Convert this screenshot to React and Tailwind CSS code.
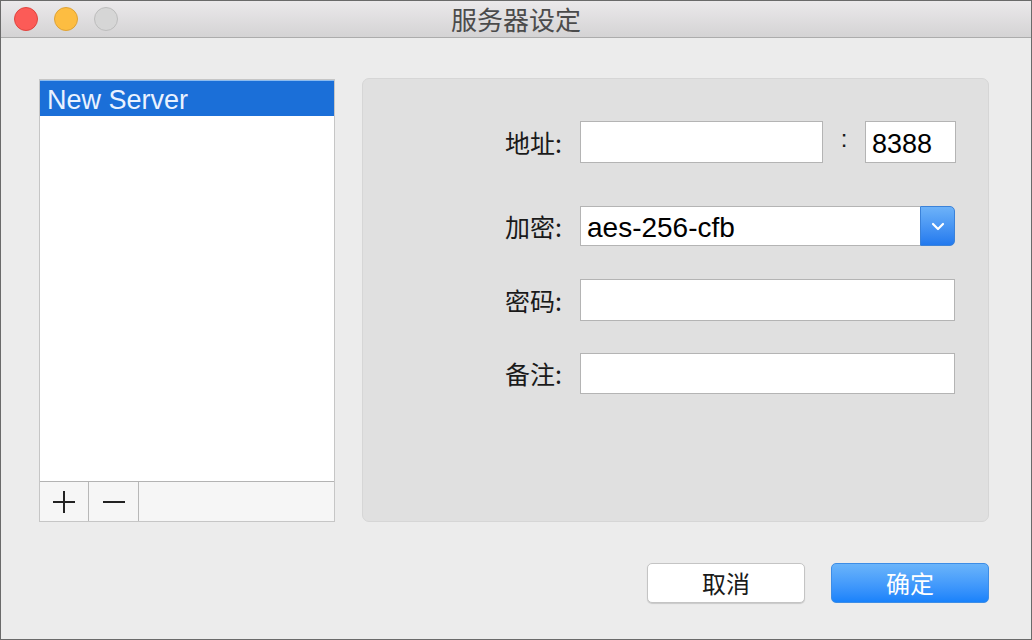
import React from "react";

const cjk = { fontFamily: '"Noto Sans CJK SC", "Noto Sans", sans-serif' };
const latin = { fontFamily: '"Liberation Sans", Arial, sans-serif' };

function Field({ className = "", children }) {
  return (
    <div className={"bg-white border border-[#b4b4b4] " + className}>{children}</div>
  );
}

function Label({ children }) {
  return (
    <div
      className="w-[200px] text-right text-[25px] leading-none text-[#1a1a1a] pr-[1px]"
      style={cjk}
    >
      {children}
    </div>
  );
}

export default function App() {
  return (
    <div className="w-[1032px] h-[640px] bg-[#ececec] border border-[#6a6a6a] flex flex-col overflow-hidden">
      {/* Title bar */}
      <div className="h-[37px] shrink-0 bg-gradient-to-b from-[#ebe9eb] to-[#d4d3d4] border-b border-[#acacac] relative flex items-center">
        <div className="flex items-center gap-[16px] pl-[13px]">
          <div className="w-[24px] h-[24px] rounded-full bg-[#fc5b57] border border-[#e0443e]" />
          <div className="w-[24px] h-[24px] rounded-full bg-[#fdbd41] border border-[#dea236]" />
          <div className="w-[24px] h-[24px] rounded-full bg-[#d6d6d6] border border-[#bdbdbd]" />
        </div>
        <div className="absolute inset-0 flex items-center justify-center pointer-events-none">
          <span className="text-[26px] text-[#4b4b4b] leading-none" style={cjk}>
            服务器设定
          </span>
        </div>
      </div>

      {/* Body */}
      <div className="flex-1 flex flex-col pl-[38px] pt-[40px]">
        <div className="flex">
          {/* Server list */}
          <div className="w-[296px] h-[443px] mt-[1px] bg-white border border-[#c6c6c6] flex flex-col">
            <div
              className="h-[36px] bg-[#1b6fd8] border-t border-[#8dbcf0] flex items-center pl-[7px] text-[27px] leading-none text-[#eaf2ff]"
              style={latin}
            >
              <span className="mt-[3px]">New Server</span>
            </div>
            <div className="flex-1" />
            <div className="h-[40px] bg-[#f6f6f6] border-t border-[#b3b3b3] flex">
              <div className="w-[49px] border-r border-[#b8b8b8] flex items-center justify-center">
                <svg width="22" height="22" viewBox="0 0 22 22">
                  <path d="M0 11H22M11 0V22" stroke="#222" strokeWidth="2" fill="none" />
                </svg>
              </div>
              <div className="w-[50px] border-r border-[#b8b8b8] flex items-center justify-center">
                <svg width="22" height="22" viewBox="0 0 22 22">
                  <path d="M0 11H22" stroke="#222" strokeWidth="2" fill="none" />
                </svg>
              </div>
              <div className="flex-1" />
            </div>
          </div>

          {/* Settings panel */}
          <div className="ml-[27px] w-[627px] h-[444px] bg-[#e0e0e0] border border-[#d6d6d6] rounded-[7px] pt-[42px] flex flex-col">
            {/* Address */}
            <div className="flex items-center h-[42px]">
              <Label>地址:</Label>
              <Field className="ml-[17px] w-[243px] h-[42px]" />
              <div className="w-[42px] text-center text-[24px] leading-none text-[#1a1a1a] -mt-[6px]" style={latin}>
                :
              </div>
              <Field className="w-[91px] h-[42px] flex items-center pl-[6px]">
                <span className="text-[27px] leading-none text-black mt-[4px]" style={latin}>8388</span>
              </Field>
            </div>

            {/* Encryption */}
            <div className="flex items-center h-[40px] mt-[43px]">
              <Label>加密:</Label>
              <div className="ml-[17px] w-[375px] h-[40px] flex">
                <div className="flex-1 bg-white border border-[#b4b4b4] border-r-0 flex items-center pl-[6px]">
                  <span className="text-[28px] leading-none text-black mt-[3px]" style={latin}>aes-256-cfb</span>
                </div>
                <div className="w-[35px] h-[40px] rounded-r-[5px] bg-gradient-to-b from-[#6db2f8] to-[#2279ee] border border-[#3b82d9] flex items-center justify-center">
                  <svg width="14" height="9" viewBox="0 0 14 9">
                    <path d="M2 2L7 7L12 2" stroke="#fff" strokeWidth="2.2" fill="none" strokeLinecap="round" strokeLinejoin="round" />
                  </svg>
                </div>
              </div>
            </div>

            {/* Password */}
            <div className="flex items-center h-[42px] mt-[33px]">
              <Label>密码:</Label>
              <Field className="ml-[17px] w-[375px] h-[42px]" />
            </div>

            {/* Remark */}
            <div className="flex items-center h-[41px] mt-[32px]">
              <Label>备注:</Label>
              <Field className="ml-[17px] w-[375px] h-[41px]" />
            </div>
          </div>
        </div>

        {/* Buttons */}
        <div className="flex justify-end w-[950px] mt-[41px] gap-[26px]">
          <div
            className="w-[158px] h-[40px] bg-white border border-[#c4c4c4] rounded-[5px] shadow-[0_1px_1px_rgba(0,0,0,0.15)] flex items-center justify-center text-[24px] leading-none text-[#1a1a1a]"
            style={cjk}
          >
            取消
          </div>
          <div
            className="w-[158px] h-[40px] bg-gradient-to-b from-[#6ab4fa] to-[#1882fb] border border-[#3d8de6] rounded-[5px] flex items-center justify-center text-[24px] leading-none text-white"
            style={cjk}
          >
            确定
          </div>
        </div>
      </div>
    </div>
  );
}
